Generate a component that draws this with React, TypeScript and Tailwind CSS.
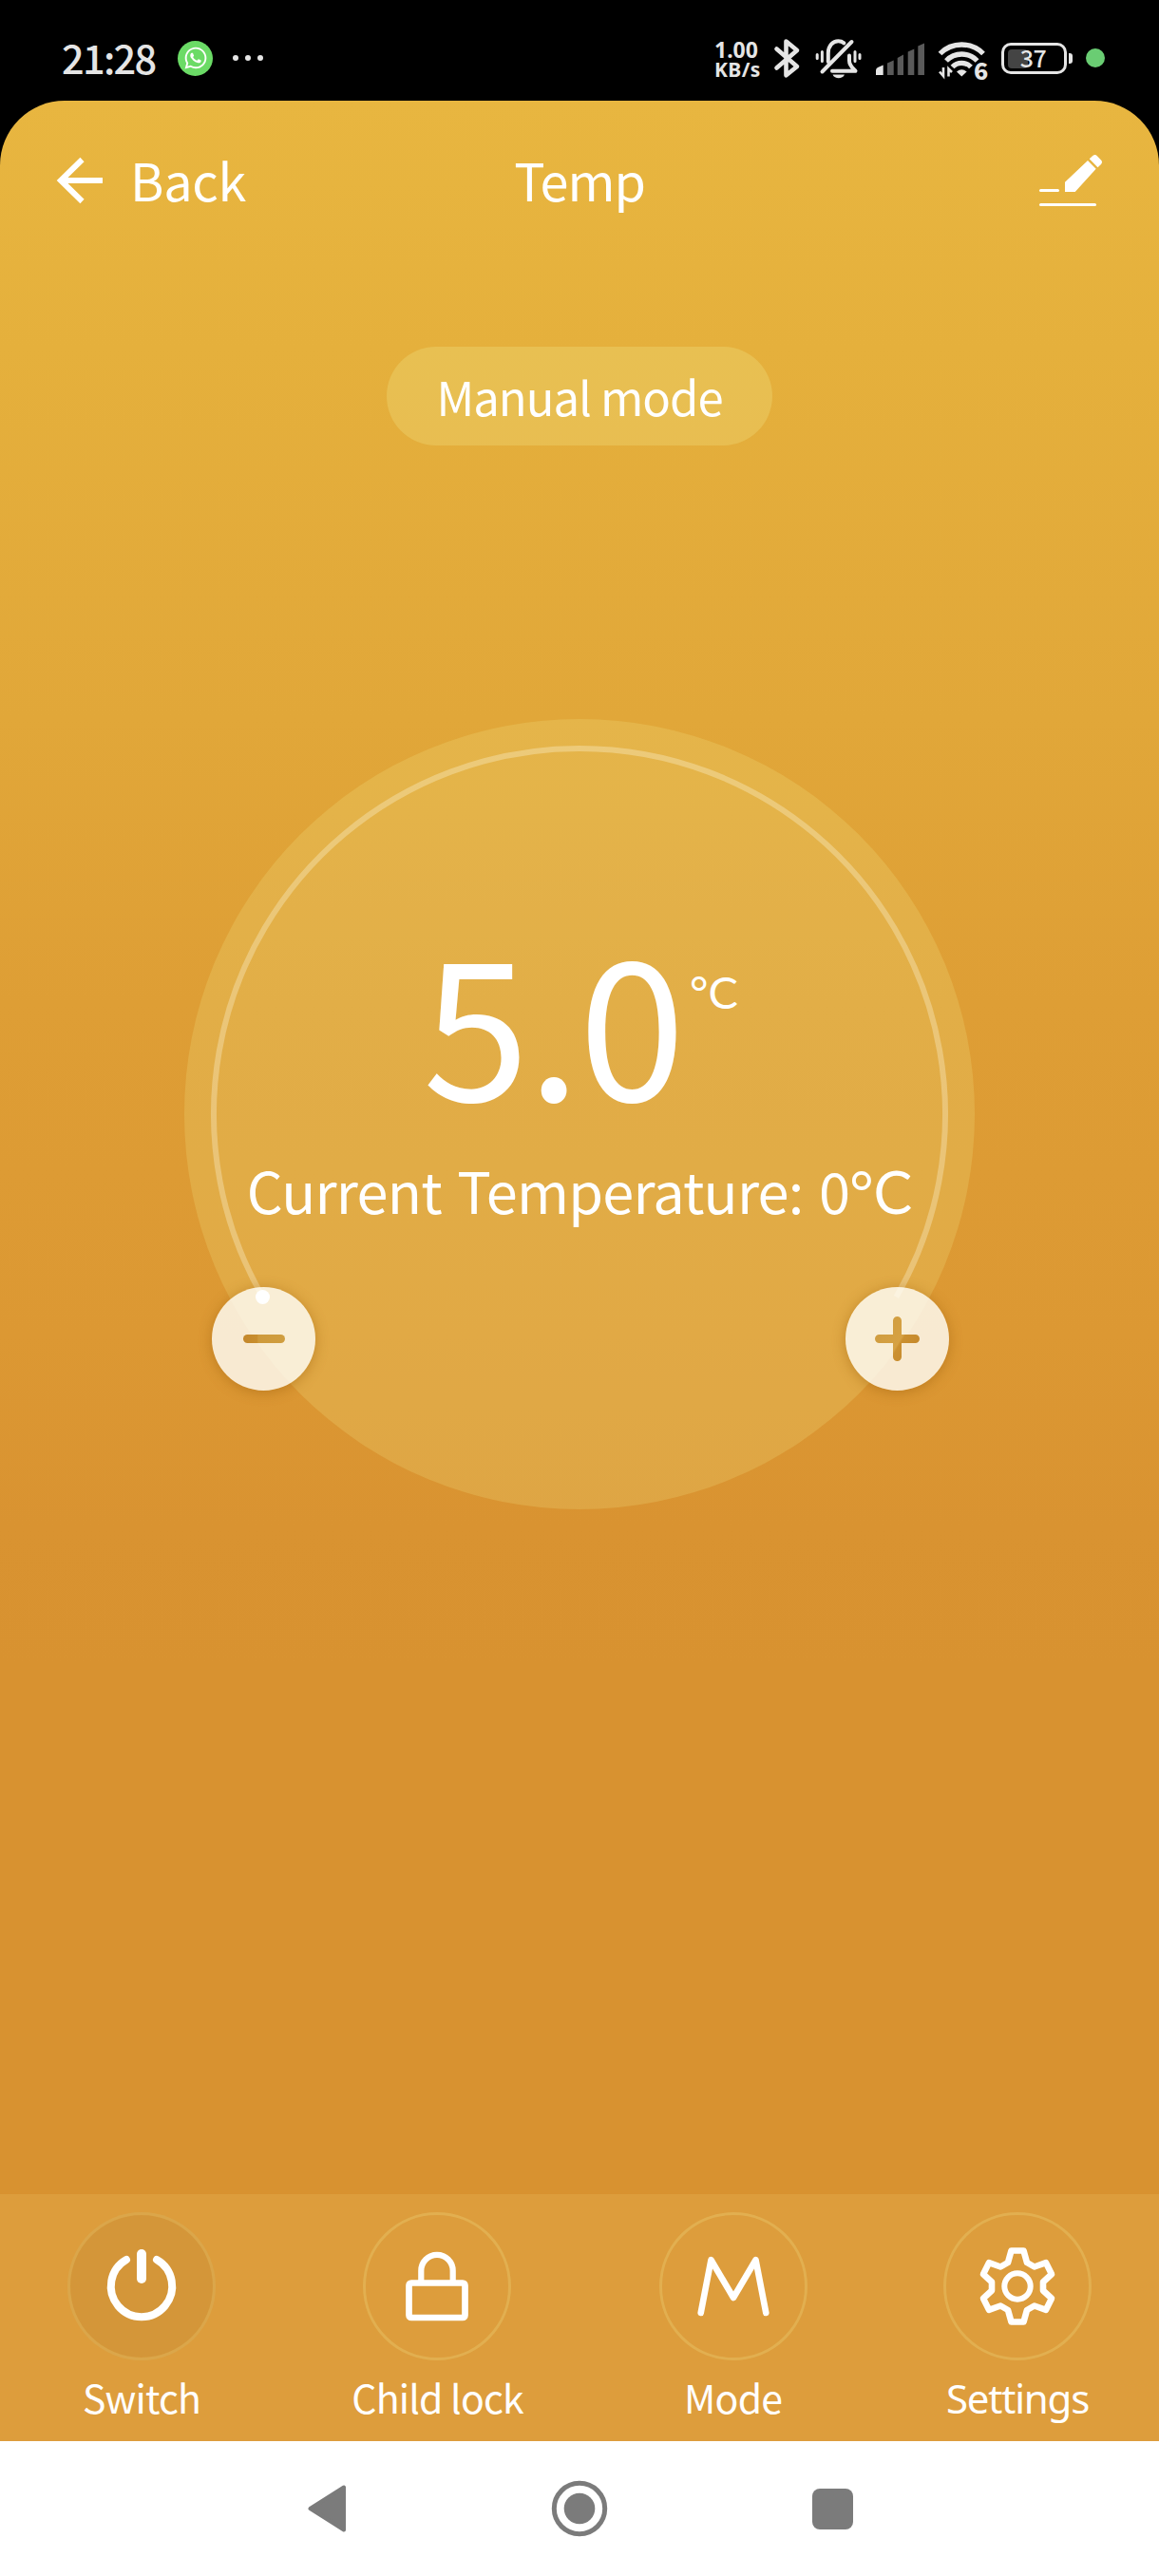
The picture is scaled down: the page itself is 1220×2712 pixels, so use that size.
import type { ReactNode } from 'react'
import { FaWhatsapp } from 'react-icons/fa'

function StatusBar() {
  return (
    <div className="flex h-[106px] shrink-0 items-center bg-black pt-4 text-[#e5e5e5]">
      <span className="ml-[65px] w-[122px] text-[41.5px] leading-none font-medium tracking-[-1.7px] whitespace-nowrap">21:28</span>
      <span className="flex size-[37px] items-center justify-center rounded-full bg-[#6bdb66] text-white">
        <FaWhatsapp size={26} />
      </span>
      <span className="ml-[21px] flex gap-[7px]">
        <i className="size-[6px] rounded-full bg-[#e5e5e5]" />
        <i className="size-[6px] rounded-full bg-[#e5e5e5]" />
        <i className="size-[6px] rounded-full bg-[#e5e5e5]" />
      </span>
      <span className="mr-[9px] ml-auto flex w-[52px] flex-col pt-[2px] font-['Noto_Sans'] font-bold whitespace-nowrap">
        <span className="text-[23px] leading-[21px]">1.00</span>
        <span className="text-[21px] leading-[20px] tracking-[0.4px]">KB/s</span>
      </span>
      <svg width="30" height="50" viewBox="813 36 30 50" fill="none" stroke="currentColor" strokeWidth="4.6" strokeLinecap="round" strokeLinejoin="round">
        <path d="M817.5 51.5 839 70 827.5 79.3V43.5L839 53 817.5 71.5" />
      </svg>
      <svg className="ml-[13px]" width="52" height="50" viewBox="856 36 52 50" fill="none" stroke="currentColor" strokeWidth="4" strokeLinecap="round" strokeLinejoin="round">
        <path d="M860.2 57.5v4M865.4 54.5v10M900 54.5v10M905 57.5v4" strokeWidth="3" />
        <path d="M871.8 65v-9c0-8 5-12.7 10.6-12.7 2.400 0 4.300.7 6 2M894 58.500v5.500c0 5 3 7 6.500 10.700H876" />
        <path d="M865.500 75.500 896.500 44" />
        <path d="M876.500 78.500h12.500c-2 5-10.500 5-12.500 0Z" fill="currentColor" stroke="none" />
      </svg>
      <svg className="ml-[12px]" width="56" height="50" viewBox="920 36 56 50" fill="#5a5a5a">
        <path d="M922 74q0-2 2-3l5.700-2.500V79H922Z" fill="#e5e5e5" />
        <path d="M934 66.500 940.700 63.500V79H934ZM944.700 61 951 57.500V79h-6.300ZM955.700 54.500 962.300 51.500V79h-6.600ZM966.300 48.500 973 45.500V79h-6.700Z" />
      </svg>
      <span className="relative ml-[10px] h-[50px] w-[56px]">
        <svg width="56" height="50" viewBox="986 36 56 50" fill="none" stroke="currentColor" strokeWidth="5.300">
          <path d="M989.500 56.500A32 32 0 0 1 1035 56.500" />
          <path d="M996 64A22.500 22.500 0 0 1 1028.600 64" />
          <path d="M1002.500 70.500A13.500 13.500 0 0 1 1022 70.500" />
          <path d="M1007 75.500q5.300-4.500 10.600 0L1012.300 80.500Z" fill="currentColor" stroke="none" />
          <path d="M993 71v9l-4-4.500M998.500 80.500v-8l3.500 3.500" strokeWidth="2.600" />
        </svg>
        <span className="absolute top-[25px] left-[39px] text-[25px] leading-none font-black">6</span>
      </span>
      <span className="relative ml-[12px] flex h-[33px] w-[69px] items-center justify-center rounded-[10px] border-[3px] border-[#e5e5e5]">
        <i className="absolute top-[4px] left-[4px] h-[20px] w-[21px] rounded-[4px] bg-[#444]" />
        <span className="relative -top-px -left-px text-[25px] leading-none font-medium tracking-[-0.500px]">37</span>
        <i className="absolute top-[8px] -right-[9px] h-[11px] w-[4px] rounded-r-[3px] bg-[#e5e5e5]" />
      </span>
      <i className="mr-[57px] ml-[20px] size-[20px] rounded-full bg-[#6acd73]" />
    </div>
  )
}

function Header() {
  return (
    <header className="grid h-[163px] grid-cols-[1fr_auto_1fr] items-center text-[54px] leading-none">
      <div className="flex items-center">
        <svg className="mt-[5px] ml-[56px]" width="56" height="56" viewBox="56 162 56 56" fill="none" stroke="currentColor" strokeWidth="6">
          <path d="M108 190H64M86.500 168 64 190l22.500 22" />
        </svg>
        <span className="mt-[3px] ml-[25px] tracking-[-0.300px]">Back</span>
      </div>
      <h1 className="mt-[3px] tracking-[-1px]">Temp</h1>
      <svg className="mt-[5px] mr-[56px] justify-self-end" width="74" height="60" viewBox="1090 160 74 60" fill="currentColor">
        <rect x="1094" y="199" width="21" height="3" rx="1.500" />
        <rect x="1094" y="214" width="60" height="3" rx="1.500" />
        <path d="M1121 191.700 1145 169l8.700 8.700L1131.700 202H1121ZM1146.700 167.300l3.500-3.300q2.500-2 4.500 0l4.300 4.500q2 2.200 0 4.500l-3.500 3.300Z" />
      </svg>
    </header>
  )
}

function RoundButton({ children, label }: { children: ReactNode; label: string }) {
  return (
    <button aria-label={label} className="flex size-[109px] items-center justify-center rounded-full bg-[#fffffa]/80 shadow-[0_2px_14px_rgba(150,90,10,0.45)]">
      {children}
    </button>
  )
}

function Dial() {
  return (
    <section className="relative mx-auto mt-[288px] h-[832px] w-[832px] rounded-full bg-[#f4f092]/20">
      <svg className="absolute inset-0" width="832" height="832" viewBox="0 0 832 832" fill="none">
        <path d="M82.600 608.500A385 385 0 1 1 749.400 608.500" stroke="#fffbe6" strokeOpacity="0.310" strokeWidth="6" />
      </svg>
      <div className="relative flex h-[417px] pt-[213px] pl-[251px] leading-none">
        <span className="w-[277px] text-[202px] leading-none tracking-[-2px]">5.0</span>
        <span className="mt-[51px] ml-[4px] font-['Lato'] text-[47px] leading-none">°C</span>
      </div>
      <p className="relative mt-[48px] flex h-[60px] items-baseline justify-center text-[59.500px] leading-[60px] tracking-[-0.800px] [word-spacing:4px] whitespace-pre">
        Current Temperature: 0<span className="font-['Lato'] text-[61px] tracking-normal">°C</span>
      </p>
      <div className="relative mt-[73px] flex justify-between pr-[27px] pl-[29px]">
        <RoundButton label="Decrease">
          <svg width="44" height="9" viewBox="0 0 44 9">
            <defs>
              <linearGradient id="minus" x1="0" y1="0" x2="1" y2="0">
                <stop offset="0" stopColor="#c4872b" />
                <stop offset="0.330" stopColor="#c88e2e" />
                <stop offset="0.360" stopColor="#ce9a3c" />
                <stop offset="1" stopColor="#d09e40" />
              </linearGradient>
            </defs>
            <rect width="44" height="9" rx="4.500" fill="url(#minus)" />
          </svg>
        </RoundButton>
        <RoundButton label="Increase">
          <svg width="47" height="47" viewBox="0 0 47 47">
            <defs>
              <linearGradient id="plus" gradientUnits="userSpaceOnUse" x1="0" y1="10" x2="46" y2="38">
                <stop offset="0" stopColor="#cf9c3f" />
                <stop offset="0.560" stopColor="#d6a143" />
                <stop offset="0.600" stopColor="#cb9030" />
                <stop offset="1" stopColor="#c4872b" />
              </linearGradient>
            </defs>
            <path d="M4.500 19H19V4.500a4.500 4.500 0 0 1 9 0V19h14.500a4.500 4.500 0 0 1 0 9H28v14.500a4.500 4.500 0 0 1-9 0V28H4.500a4.500 4.500 0 0 1 0-9Z" fill="url(#plus)" />
          </svg>
        </RoundButton>
      </div>
      <i className="absolute top-[601px] left-[75px] size-[15px] rounded-full bg-white" />
    </section>
  )
}

function Action({ label, children, active, labelClass }: { label: string; children: ReactNode; active?: boolean; labelClass: string }) {
  return (
    <button className="flex flex-col items-center">
      <span className={active ? 'flex size-[156px] items-center justify-center rounded-full border-[3px] border-[#f4e68c]/20 bg-black/4' : 'flex size-[156px] items-center justify-center rounded-full border-[3px] border-[#f4e68c]/25'}>
        <svg width="100" height="100" viewBox="-50 -50 100 100" fill="none" stroke="currentColor" strokeLinecap="round" strokeLinejoin="round">
          {children}
        </svg>
      </span>
      <span className={labelClass}>{label}</span>
    </button>
  )
}

function Footer() {
  return (
    <footer className="mt-auto flex h-[260px] items-start justify-between bg-[#dd9d3c] px-[71px] pt-[19px]">
      <Action label="Switch" active labelClass="mt-[18px] text-[41px] leading-none tracking-[-0.900px]">
        <path d="M-16-28A32.200 32.200 0 1 0 16-28" strokeWidth="8" />
        <path d="M0-34V-8" strokeWidth="10" />
      </Action>
      <Action label="Child lock" labelClass="mt-[18px] w-[180px] text-center text-[41px] leading-none tracking-[-0.800px] whitespace-nowrap">
        <rect x="-29.500" y="-3.500" width="59" height="36.500" rx="2.500" strokeWidth="6.700" />
        <path d="M-16.700-4v-12.500a16.700 16.700 0 0 1 33.400 0V-4" strokeWidth="6.200" />
      </Action>
      <Action label="Mode" labelClass="mt-[18px] text-[41px] leading-none tracking-[-0.800px]">
        <path d="M-34.300 28-23.500-27.800 0 12 23.500-27.800 34.300 28" strokeWidth="6.600" />
      </Action>
      <Action label="Settings" labelClass="mt-[18px] font-['Noto_Sans'] text-[42px] leading-[43px] tracking-[-1.200px]">
        <path d="M-6.500-37.500H6.500L10-25 17.800-20.500 30-24.800 36-12.800 27-4.500V4.500L36 12.800 30 24.800 17.800 20.500 10 25 6.500 37.500H-6.500L-10 25-17.800 20.500-30 24.800-36 12.800-27 4.500V-4.500L-36-12.800-30-24.800-17.800-20.500-10-25Z" strokeWidth="6.600" />
        <circle r="13.700" strokeWidth="6" />
      </Action>
    </footer>
  )
}

function NavBar() {
  return (
    <nav className="flex h-[142px] shrink-0 items-center justify-between bg-white pr-[322px] pl-[324px] text-[#7b7b7b]">
      <svg width="40" height="50" viewBox="0 0 40 50" fill="currentColor" stroke="currentColor" strokeWidth="4" strokeLinejoin="round">
        <path d="M38 2.500v45L2.500 25Z" />
      </svg>
      <svg width="60" height="60" viewBox="-30 -30 60 60" fill="currentColor">
        <circle r="26.700" fill="none" stroke="currentColor" strokeWidth="5" />
        <circle r="16.300" />
      </svg>
      <i className="size-[43px] rounded-[8px] bg-[#7b7b7b]" />
    </nav>
  )
}

export default function App() {
  return (
    <div className="flex h-[2712px] w-[1220px] flex-col overflow-hidden bg-black font-['Noto_Sans_CJK_SC',sans-serif] text-white">
      <StatusBar />
      <main className="flex flex-1 flex-col overflow-hidden rounded-t-[68px] bg-[linear-gradient(180deg,#e8b640_0px,#e5b03c_260px,#e1a739_650px,#de9e35_950px,#dc9833_1300px,#d99331_1500px,#d89230_1650px,#d89230_100%)]">
        <Header />
        <div className="mx-auto mt-[96px] flex h-[104px] w-[406px] items-center justify-center rounded-full bg-[#f4f092]/25 pb-[2px] text-[49px] leading-none tracking-[-1px] whitespace-nowrap">
          Manual mode
        </div>
        <Dial />
        <Footer />
      </main>
      <NavBar />
    </div>
  )
}
